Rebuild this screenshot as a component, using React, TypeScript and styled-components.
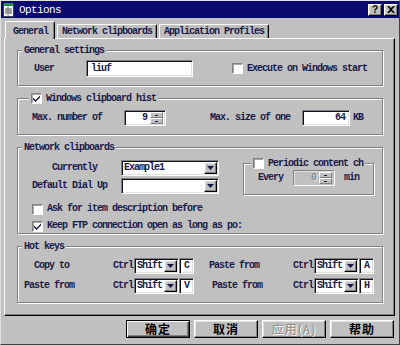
import styled, { css, createGlobalStyle } from "styled-components"

const GlobalStyle = createGlobalStyle`
    * {
        box-sizing: border-box;
    }
    body {
        margin: 0;
        background: #c0c0c0;
        font-family: "Liberation Mono", "Noto Sans CJK SC", monospace;
        font-size: 10px;
        font-weight: bold;
        letter-spacing: -1px;
        line-height: 12px;
        color: #1a1a4a;
    }
`

const raised = css`
    border: 1px solid;
    border-color: #fff #000 #000 #fff;
    box-shadow: inset -1px -1px #808080, inset 1px 1px #dfdfdf;
`

const sunken = css`
    border: 1px solid;
    border-color: #808080 #fff #fff #808080;
    box-shadow: inset 1px 1px #101020, inset -1px -1px #dfdfdf;
`

function CheckBox({ checked }: { checked?: boolean }) {
    return (
        <Check>
            {checked && (
                <svg width="7" height="7" viewBox="0 0 7 7">
                    <path d="M0 2.5 L2.5 5 L7 0.5 L7 2.5 L2.5 7 L0 4.5 Z" fill="#1a1a4a" />
                </svg>
            )}
        </Check>
    )
}

function DownArrow({ color = "#1a1a4a" }: { color?: string }) {
    return (
        <svg width="7" height="4" viewBox="0 0 7 4">
            <path d="M0 0 H7 L3.5 4 Z" fill={color} />
        </svg>
    )
}

function SpinBox({ value, width, disabled }: { value: string; width: number; disabled?: boolean }) {
    return (
        <SpinField $w={width} $disabled={disabled}>
            <SpinValue $disabled={disabled}>{value}</SpinValue>
            <Spinner>
                <SpinBtn />
                <SpinBtn />
            </Spinner>
        </SpinField>
    )
}

function Combo({ value, width }: { value?: string; width: number }) {
    return (
        <ComboField $w={width}>
            <ComboText>{value}</ComboText>
            <DropBtn>
                <DownArrow />
            </DropBtn>
        </ComboField>
    )
}

function HotKey({ label, indent, keyName }: { label: string; indent: number; keyName: string }) {
    return (
        <HotCell>
            <Label $w={95} $indent={indent}>
                {label}
            </Label>
            <CtrlText>Ctrl</CtrlText>
            <Combo value="Shift" width={45} />
            <KeyField>{keyName}</KeyField>
        </HotCell>
    )
}

function App() {
    return (
        <>
            <GlobalStyle />
            <Window>
                <TitleBar>
                    <svg width="11" height="14" viewBox="0 0 11 14">
                        <rect x="0.5" y="1.5" width="10" height="12" fill="#fff" stroke="#404040" />
                        <rect x="1" y="0" width="9" height="3" fill="#2a8a5a" />
                        <path d="M2 6 H9 M2 8 H9 M2 10 H9" stroke="#404040" />
                        <path d="M5 3 V13" stroke="#808080" />
                    </svg>
                    <Title>Options</Title>
                    <CaptionButtons>
                        <CaptionButton>?</CaptionButton>
                        <CaptionButton>
                            <svg width="8" height="7" viewBox="0 0 8 7">
                                <path d="M0 0 H2 L4 2 L6 0 H8 L5 3.5 L8 7 H6 L4 5 L2 7 H0 L3 3.5 Z" fill="#000" />
                            </svg>
                        </CaptionButton>
                    </CaptionButtons>
                </TitleBar>

                <TabStrip>
                    <Tab $active>General</Tab>
                    <Tab>Network clipboards</Tab>
                    <Tab>Application Profiles</Tab>
                </TabStrip>

                <Panel>
                    <Group $h={36} $pt={9}>
                        <Legend $left={4}>General settings</Legend>
                        <Row $h={17}>
                            <Label $w={68} $indent={16}>
                                User
                            </Label>
                            <TextField $w={107}>liuf</TextField>
                            <CheckLine $ml={39}>
                                <CheckBox />
                                Execute on Windows start
                            </CheckLine>
                        </Row>
                    </Group>

                    <Group $h={37} $pt={11}>
                        <Legend $left={11}>
                            <CheckBox checked />
                            Windows clipboard hist
                        </Legend>
                        <Row $h={16}>
                            <Label $w={106} $indent={14}>
                                Max. number of
                            </Label>
                            <SpinBox value="9" width={42} />
                            <Label $w={136} $indent={44}>
                                Max. size of one
                            </Label>
                            <TextField $w={48} $right>
                                64
                            </TextField>
                            <Unit>KB</Unit>
                        </Row>
                    </Group>

                    <Group $h={87} $pt={12}>
                        <Legend $left={4}>Network clipboards</Legend>
                        <Upper>
                            <ComboColumn>
                                <Row $h={16}>
                                    <Label $w={103} $indent={34}>
                                        Currently
                                    </Label>
                                    <Combo value="Example1" width={98} />
                                </Row>
                                <Row $h={16}>
                                    <Label $w={103} $indent={14}>
                                        Default Dial Up
                                    </Label>
                                    <Combo width={98} />
                                </Row>
                            </ComboColumn>
                            <SubGroup>
                                <Legend $left={7}>
                                    <CheckBox />
                                    Periodic content ch
                                </Legend>
                                <Row $h={16}>
                                    <Label $w={35}>Every</Label>
                                    <SpinBox value="0" width={42} disabled />
                                    <Unit $ml={9}>min</Unit>
                                </Row>
                            </SubGroup>
                        </Upper>
                        <Checks>
                            <CheckLine>
                                <CheckBox />
                                Ask for item description before
                            </CheckLine>
                            <CheckLine>
                                <CheckBox checked />
                                Keep FTP connection open as long as po:
                            </CheckLine>
                        </Checks>
                    </Group>

                    <Group $h={57} $pt={11}>
                        <Legend $left={4}>Hot keys</Legend>
                        <HotGrid>
                            <HotKey label="Copy to" indent={16} keyName="C" />
                            <HotKey label="Paste from" indent={11} keyName="A" />
                            <HotKey label="Paste from" indent={6} keyName="V" />
                            <HotKey label="Paste from" indent={14} keyName="H" />
                        </HotGrid>
                    </Group>
                </Panel>

                <ButtonRow>
                    <DlgButton $default>确定</DlgButton>
                    <DlgButton>取消</DlgButton>
                    <DlgButton disabled>应用(A)</DlgButton>
                    <DlgButton>帮助</DlgButton>
                </ButtonRow>
            </Window>
        </>
    )
}

export default App

const Window = styled.div`
    width: 400px;
    height: 345px;
    border: 1px solid;
    border-color: #dfdfdf #404040 #404040 #dfdfdf;
    display: flex;
    flex-direction: column;
    overflow: hidden;
`

const TitleBar = styled.div`
    height: 17px;
    background: #0a0a70;
    display: flex;
    align-items: center;
    gap: 5px;
    padding: 0 1px 0 2px;
`

const Title = styled.span`
    color: #fff;
    font-weight: normal;
    letter-spacing: -0.6px;
    font-size: 11px;
`

const CaptionButtons = styled.div`
    margin-left: auto;
    display: flex;
    gap: 2px;
`

const CaptionButton = styled.div`
    width: 14px;
    height: 12px;
    background: #c0c0c0;
    ${raised}
    display: flex;
    justify-content: center;
    align-items: center;
    color: #000;
    font-family: "Liberation Sans", sans-serif;
    font-size: 10px;
    font-weight: bold;
    letter-spacing: 0;
`

const TabStrip = styled.div`
    height: 20px;
    display: flex;
    align-items: flex-end;
    gap: 2px;
    padding-left: 4px;
`

const Tab = styled.div<{ $active?: boolean }>`
    height: ${(p) => (p.$active ? "18px" : "14px")};
    margin-bottom: ${(p) => (p.$active ? "-1px" : "0")};
    padding: ${(p) => (p.$active ? "2px 6px 0 7px" : "0 4px")};
    background: #c0c0c0;
    border: 1px solid;
    border-bottom: none;
    border-color: #fff #000 #000 #fff;
    border-radius: 2px 2px 0 0;
    box-shadow: inset -1px 0 #808080;
    display: flex;
    align-items: center;
    position: relative;
    z-index: ${(p) => (p.$active ? 1 : 0)};
`

const Panel = styled.div`
    height: 278px;
    margin: 0 4px 0 3px;
    border: 1px solid;
    border-color: #fff #000 #000 #fff;
    box-shadow: inset -1px -1px #808080;
    padding: 11px 11px 0 12px;
    display: flex;
    flex-direction: column;
    gap: 12px;
`

const Group = styled.div<{ $h: number; $pt: number }>`
    position: relative;
    height: ${(p) => p.$h}px;
    padding-top: ${(p) => p.$pt}px;
    border: 1px solid #808080;
    box-shadow: inset 1px 1px #fff, 1px 1px #fff;
`

const Legend = styled.div<{ $left: number }>`
    position: absolute;
    top: -7px;
    left: ${(p) => p.$left}px;
    padding: 0 2px;
    height: 13px;
    background: #c0c0c0;
    display: flex;
    align-items: center;
    gap: 4px;
    white-space: nowrap;
`

const Row = styled.div<{ $h: number }>`
    height: ${(p) => p.$h}px;
    display: flex;
    align-items: center;
`

const Label = styled.div<{ $w: number; $indent?: number }>`
    width: ${(p) => p.$w}px;
    padding-left: ${(p) => p.$indent ?? 0}px;
    flex-shrink: 0;
    white-space: nowrap;
`

const TextField = styled.div<{ $w: number; $right?: boolean }>`
    width: ${(p) => p.$w}px;
    height: 100%;
    background: #fff;
    ${sunken}
    padding: 0 4px;
    display: flex;
    align-items: center;
    justify-content: ${(p) => (p.$right ? "flex-end" : "flex-start")};
`

const Unit = styled.span<{ $ml?: number }>`
    margin-left: ${(p) => p.$ml ?? 3}px;
`

const Check = styled.div`
    width: 11px;
    height: 11px;
    flex-shrink: 0;
    background: #fff;
    border: 1px solid;
    border-color: #808080 #fff #fff #808080;
    box-shadow: inset 1px 1px #a8a8a8;
    display: flex;
    justify-content: center;
    align-items: center;
`

const CheckLine = styled.div<{ $ml?: number }>`
    margin-left: ${(p) => p.$ml ?? 0}px;
    display: flex;
    align-items: center;
    gap: 4px;
    white-space: nowrap;
`

const SpinField = styled.div<{ $w: number; $disabled?: boolean }>`
    width: ${(p) => p.$w}px;
    height: 16px;
    background: ${(p) => (p.$disabled ? "#c0c0c0" : "#fff")};
    border: 1px solid;
    border-color: #808080 #fff #fff #808080;
    box-shadow: ${(p) => (p.$disabled ? "inset 1px 1px #dfdfdf" : "inset 1px 1px #101020, inset -1px -1px #dfdfdf")};
    display: flex;
    align-items: center;
    padding: 1px 2px 1px 1px;
`

const SpinValue = styled.div<{ $disabled?: boolean }>`
    flex: 1;
    text-align: right;
    padding-right: 3px;
    color: ${(p) => (p.$disabled ? "#8a8a8a" : "inherit")};
    text-shadow: ${(p) => (p.$disabled ? "1px 1px #e8e8e8" : "none")};
`

const Spinner = styled.div`
    width: 13px;
    height: 12px;
    display: flex;
    flex-direction: column;
`

const SpinBtn = styled.div`
    flex: 1;
    background: #c0c0c0;
    border: 1px solid;
    border-color: #fff #808080 #808080 #fff;
    display: flex;
    justify-content: center;
    align-items: center;

    &::after {
        content: "";
        width: 3px;
        height: 1px;
        background: #1a1a4a;
    }
`

const ComboField = styled.div<{ $w: number }>`
    width: ${(p) => p.$w}px;
    height: 16px;
    flex-shrink: 0;
    background: #fff;
    ${sunken}
    display: flex;
    align-items: center;
    padding: 0 1px 0 2px;
`

const ComboText = styled.div`
    flex: 1;
    white-space: nowrap;
    overflow: hidden;
`

const DropBtn = styled.div`
    width: 13px;
    height: 12px;
    background: #c0c0c0;
    ${raised}
    display: flex;
    justify-content: center;
    align-items: center;
`

const Upper = styled.div`
    display: flex;
    align-items: flex-start;
`

const ComboColumn = styled.div`
    display: flex;
    flex-direction: column;
    gap: 2px;
`

const SubGroup = styled.div`
    position: relative;
    margin: 3px 0 0 24px;
    width: 131px;
    height: 32px;
    padding: 6px 0 0 14px;
    border: 1px solid #808080;
    box-shadow: inset 1px 1px #fff, 1px 1px #fff;
`

const Checks = styled.div`
    margin-top: 8px;
    padding-left: 14px;
    display: flex;
    flex-direction: column;
    gap: 5px;
`

const HotGrid = styled.div`
    display: grid;
    grid-template-columns: 180px 180px;
    row-gap: 4px;
`

const HotCell = styled.div`
    height: 16px;
    display: flex;
    align-items: center;
`

const CtrlText = styled.div`
    width: 21px;
    flex-shrink: 0;
`

const KeyField = styled.div`
    width: 15px;
    height: 16px;
    background: #fff;
    ${sunken}
    display: flex;
    align-items: center;
    padding-left: 4px;
`

const ButtonRow = styled.div`
    margin-top: 4px;
    padding-right: 5px;
    display: flex;
    justify-content: flex-end;
    gap: 4px;
`

const DlgButton = styled.button<{ $default?: boolean }>`
    width: 64px;
    height: 18px;
    padding: 0;
    background: #c0c0c0;
    color: #000;
    font-family: "Noto Sans CJK SC", "Liberation Sans", sans-serif;
    font-size: 12px;
    font-weight: bold;
    letter-spacing: 1px;
    line-height: 14px;
    ${raised}
    ${(p) =>
        p.$default &&
        css`
            border-color: #000;
            box-shadow: inset 1px 1px #fff, inset -1px -1px #404040, inset -2px -2px #808080;
        `}

    &:disabled {
        color: #8a8a8a;
        font-weight: normal;
        text-shadow: 1px 1px #fff;
    }
`
